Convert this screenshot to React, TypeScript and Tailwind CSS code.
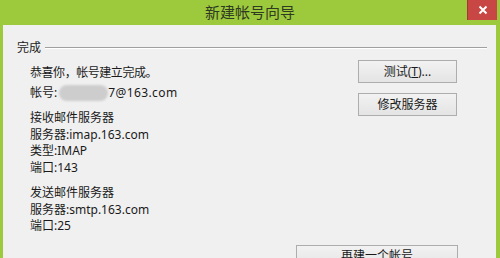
import React from "react";

const font = { fontFamily: '"Noto Sans", "Noto Sans CJK SC", sans-serif' };

function Btn({ children, w }: { children: React.ReactNode; w: string }) {
  return (
    <div
      className={`${w} h-[23px] flex items-center justify-center border border-[#adadad] bg-gradient-to-b from-[#f2f2f2] to-[#e4e4e4] text-[12px] text-[#1a1a1a]`}
    >
      {children}
    </div>
  );
}

export default function App() {
  return (
    <div className="w-[500px] h-[258px] overflow-hidden bg-[#9dc93d] flex flex-col" style={font}>
      <div className="relative h-[25px] flex items-center justify-center shrink-0">
        <span className="text-[15px] text-[#2f3a22] leading-none">新建帐号向导</span>
        <div className="absolute right-[3px] top-0 w-[30px] h-[20px] bg-[#c84643] border-l border-[#a83633] flex items-center justify-center">
          <svg width="10" height="10" viewBox="0 0 10 10">
            <path d="M1.5 1.5 L8.5 8.5 M8.5 1.5 L1.5 8.5" stroke="white" strokeWidth="2" />
          </svg>
        </div>
      </div>
      <div className="flex-1 ml-[3px] mr-[4px] bg-[#f0f0f0] text-[#1a1a1a] text-[12px]">
        <div className="mt-[14px] ml-[14px] mr-[9px] h-[17px] flex items-center">
          <span className="leading-[17px]">完成</span>
          <div className="flex-1 ml-[4px] h-[2px] border-t border-[#a0a0a0] border-b border-b-white" />
        </div>
        <div className="flex mt-[4px]">
          <div className="w-[355px] pl-[27px] pt-[4px]">
            <div className="leading-[17px] h-[17px] tracking-[-0.45px]">恭喜你，帐号建立完成。</div>
            <div className="leading-[17px] h-[17px] mt-[3px] flex items-center">
              <span>帐号:</span>
              <span className="inline-block w-[49px] h-[16px] rounded-full bg-[#cdcdcd] blur-[1px] ml-[2px]" />
              <span className="tracking-[0.4px]">7@163.com</span>
            </div>
            <div className="mt-[9px]">
              <div className="leading-[16.5px] h-[16.5px]">接收邮件服务器</div>
              <div className="leading-[16.5px] h-[16.5px]">服务器:imap.163.com</div>
              <div className="leading-[16.5px] h-[16.5px]">类型:IMAP</div>
              <div className="leading-[16.5px] h-[16.5px]">端口:143</div>
            </div>
            <div className="mt-[9px]">
              <div className="leading-[16.5px] h-[16.5px]">发送邮件服务器</div>
              <div className="leading-[16.5px] h-[16.5px]">服务器:smtp.163.com</div>
              <div className="leading-[16.5px] h-[16.5px]">端口:25</div>
            </div>
          </div>
          <div className="flex flex-col gap-[10px]">
            <Btn w="w-[99px]">测试(<span className="underline">T</span>)...</Btn>
            <Btn w="w-[99px]">修改服务器</Btn>
          </div>
        </div>
        <div className="mt-[10px] pl-[293px]">
          <Btn w="w-[162px]">再建一个帐号</Btn>
        </div>
      </div>
    </div>
  );
}
